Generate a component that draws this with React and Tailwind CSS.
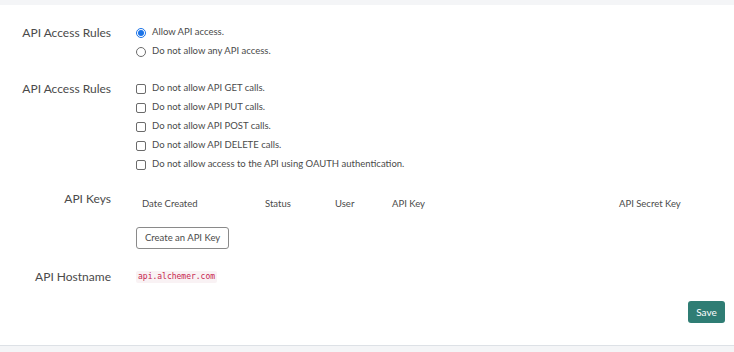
const font = { fontFamily: "Lato, 'Open Sans', sans-serif" };

const Radio = ({ checked }) => (
  <span
    className={`flex items-center justify-center w-[10px] h-[10px] rounded-full border ${
      checked ? "border-[#1a73e8]" : "border-[#6b6b6b]"
    }`}
  >
    {checked && <span className="w-[6px] h-[6px] rounded-full bg-[#1a73e8]" />}
  </span>
);

const Checkbox = () => (
  <span className="w-[10px] h-[10px] rounded-[2px] border border-[#6b6b6b] bg-white" />
);

const Row = ({ label, children, labelClass = "" }) => (
  <div className="flex">
    <div className={`w-[111px] shrink-0 text-right text-[12px] text-[#4a4a4a] leading-[19px] ${labelClass}`}>
      {label}
    </div>
    <div className="ml-[25px] flex-1">{children}</div>
  </div>
);

const App = () => {
  const checks = [
    "Do not allow API GET calls.",
    "Do not allow API PUT calls.",
    "Do not allow API POST calls.",
    "Do not allow API DELETE calls.",
    "Do not allow access to the API using OAUTH authentication.",
  ];

  return (
    <div className="w-[734px] h-[352px] bg-[#f4f5f7] pt-[5px] overflow-hidden" style={font}>
      <div className="bg-white h-[341px] border-b border-[#dde1e6] pt-[18px] pr-[9px] flex flex-col">

        {/* access radios */}
        <Row label="API Access Rules">
          <label className="flex items-center gap-[6px] h-[19px] text-[9.5px] text-[#4a4a4a]">
            <Radio checked /> Allow API access.
          </label>
          <label className="flex items-center gap-[6px] h-[19px] text-[9.5px] text-[#4a4a4a]">
            <Radio /> Do not allow any API access.
          </label>
        </Row>

        {/* method checkboxes */}
        <div className="mt-[18px]">
          <Row label="API Access Rules">
            {checks.map((c) => (
              <label key={c} className="flex items-center gap-[6px] h-[19px] text-[9.5px] text-[#4a4a4a]">
                <Checkbox /> {c}
              </label>
            ))}
          </Row>
        </div>

        {/* api keys */}
        <div className="mt-[21px]">
          <Row label="API Keys" labelClass="-mt-[6px]">
            <div className="grid grid-cols-[123px_70px_57px_227px_1fr] h-[19px] items-center text-[9.5px] text-[#4a4a4a]">
              <span className="pl-[6px]">Date Created</span>
              <span className="pl-[6px]">Status</span>
              <span className="pl-[6px]">User</span>
              <span className="pl-[6px]">API Key</span>
              <span className="pl-[6px]">API Secret Key</span>
            </div>
            <button className="mt-[13px] h-[22px] px-[8px] border border-[#8a8a8a] rounded-[3px] text-[9.5px] text-[#4a4a4a] bg-white">
              Create an API Key
            </button>
          </Row>
        </div>

        {/* hostname */}
        <div className="mt-[18px]">
          <Row label="API Hostname">
            <div className="h-[19px] flex items-center">
              <code
                className="px-[2px] rounded-[2px] bg-[#f9f2f4] text-[#c7254e] text-[8px]"
                style={{ fontFamily: "'DejaVu Sans Mono', monospace" }}
              >
                api.alchemer.com
              </code>
            </div>
          </Row>
        </div>

        <div className="flex justify-end mt-[15px]">
          <button className="h-[22px] w-[37px] rounded-[3px] bg-[#2f7d74] text-white text-[10px]">
            Save
          </button>
        </div>
      </div>
    </div>
  );
};

export default App;
